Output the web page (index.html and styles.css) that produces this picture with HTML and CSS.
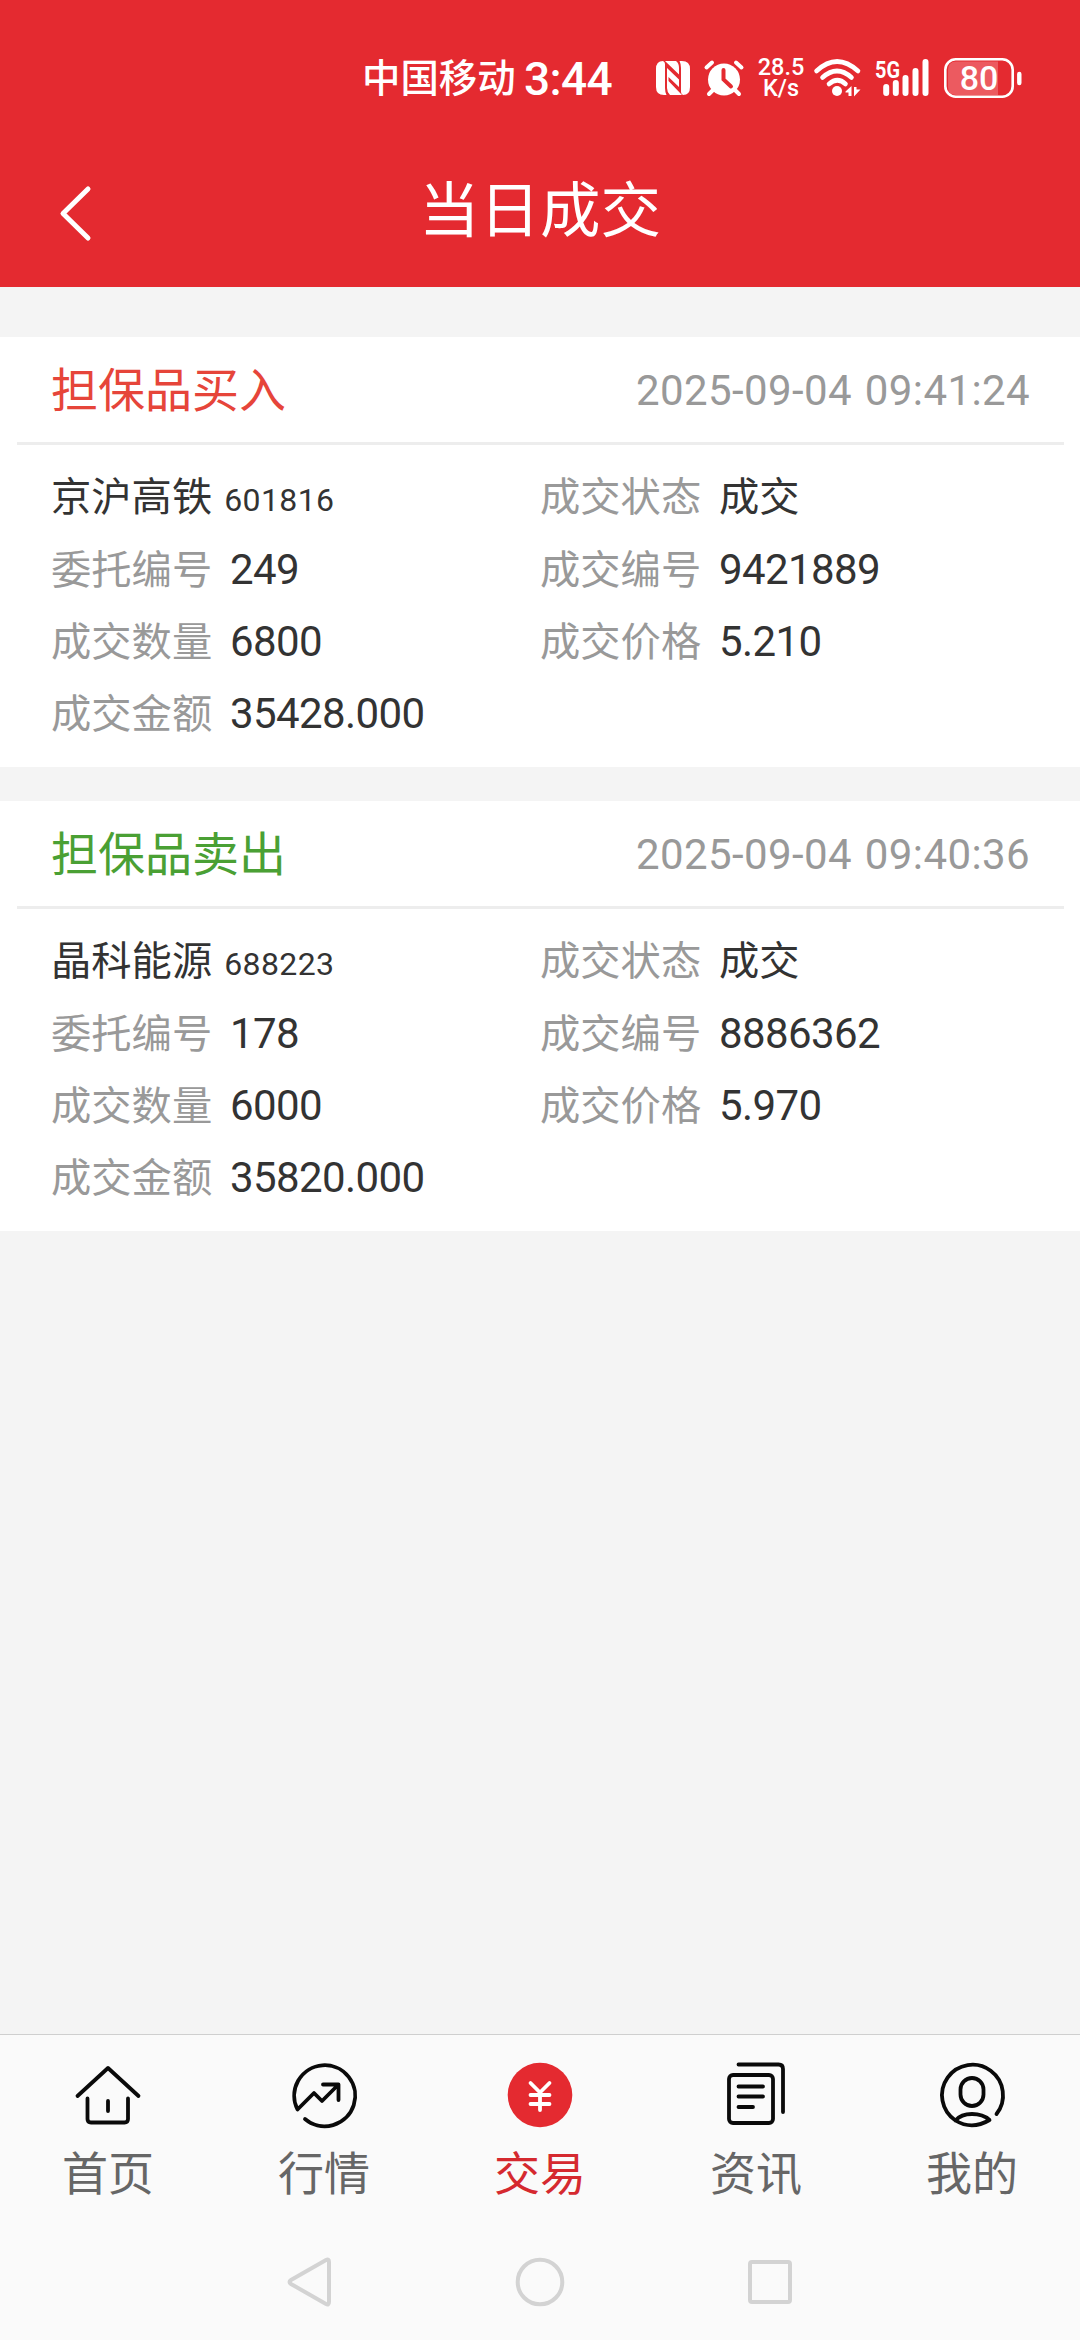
FILE: index.html
```html
<!DOCTYPE html>
<html lang="zh-CN">
<head>
<meta charset="utf-8">
<title>当日成交</title>
<link rel="stylesheet" href="styles.css">
</head>
<body>
<div class="screen">
  <header class="header">
    <div class="status">
      <span class="carrier">中国移动</span>
      <span class="clock">3:44</span>
      <svg class="nfc" width="34" height="34" viewBox="0 0 34 34">
        <path d="M7 0Q0 0 0 8V26Q0 34 8 34H10.500Q9 31 9 27V3Q9 1 7 0ZM27 34Q34 34 34 26V8Q34 0 26 0H23.500Q25 3 25 7V31Q25 33 27 34ZM9 0L23 13.500V7Q23 2 20 0ZM11 7V27Q11 31 14 34H26L12.500 20V16L23 26V18.500Z" fill="#fff"/>
      </svg>
      <svg class="alarm" width="40" height="36" viewBox="0 0 40 36">
        <circle cx="20" cy="19.500" r="16" fill="#fff"/>
        <path d="M2.500 7.500L8 2.500M37.500 7.500L32 2.500M5 34L9 30M35 34L31 30" stroke="#fff" stroke-width="4" stroke-linecap="round"/>
        <path d="M19.500 10V19.500L27 26.500" fill="none" stroke="#e42a30" stroke-width="4" stroke-linecap="round"/>
      </svg>
      <div class="speed"><span>28.5</span><span>K/s</span></div>
      <svg class="wifi" width="48" height="38" viewBox="0 0 48 38">
        <g fill="none" stroke="#fff" stroke-width="4.600" stroke-linecap="round">
          <path d="M2.500 12Q23 -7 44 12M8.500 18.500Q23 5.500 37.500 18.500M15 25Q23.500 17.500 31.500 25"/>
        </g>
        <circle cx="23" cy="32" r="5" fill="#fff"/>
        <path d="M31.500 32.500L37.500 27V37H34.500V33.500H31.500ZM40 28H42.500V30.500H46.500L40 37.500Z" fill="#fff"/>
      </svg>
      <svg class="signal" width="56" height="38" viewBox="0 0 56 38">
        <text class="signal-text" x="0" y="19" textLength="25" lengthAdjust="spacingAndGlyphs">5G</text>
        <path d="M11.200 28V34M20.800 24V34M30.500 19V34M40.500 12V34M50.500 3V34" stroke="#fff" stroke-width="6" stroke-linecap="round"/>
      </svg>
      <svg class="battery" width="78" height="40" viewBox="0 0 78 40">
        <path d="M12 3.500H54V37H12Q4 37 4 29V12Q4 3.500 12 3.500Z" fill="#ec5a60"/>
        <rect x="1.300" y="1.300" width="67.400" height="37.400" rx="10.500" fill="none" stroke="#fff" stroke-width="2.600"/>
        <path d="M75.300 16V25" stroke="#fff" stroke-width="4.400" stroke-linecap="round"/>
        <text class="battery-text" x="35" y="32" text-anchor="middle">80</text>
      </svg>
    </div>
    <div class="titlebar">
      <svg class="back" width="36" height="60" viewBox="0 0 36 60"><path d="M30 6L5 30.500L30 55" fill="none" stroke="#fff" stroke-width="5" stroke-linecap="round" stroke-linejoin="round"/></svg>
      <h1 class="title">当日成交</h1>
    </div>
  </header>

  <main class="list">
    <section class="card">
      <div class="card-head"><h2 class="side buy">担保品买入</h2><time class="date">2025-09-04 09:41:24</time></div>
      <div class="fields">
        <div class="field"><span class="name">京沪高铁</span><span class="code">601816</span></div>
        <div class="field"><span class="label">成交状态</span><span class="value state">成交</span></div>
        <div class="field"><span class="label">委托编号</span><span class="value">249</span></div>
        <div class="field"><span class="label">成交编号</span><span class="value">9421889</span></div>
        <div class="field"><span class="label">成交数量</span><span class="value">6800</span></div>
        <div class="field"><span class="label">成交价格</span><span class="value">5.210</span></div>
        <div class="field"><span class="label">成交金额</span><span class="value">35428.000</span></div>
      </div>
    </section>
    <section class="card">
      <div class="card-head"><h2 class="side sell">担保品卖出</h2><time class="date">2025-09-04 09:40:36</time></div>
      <div class="fields">
        <div class="field"><span class="name">晶科能源</span><span class="code">688223</span></div>
        <div class="field"><span class="label">成交状态</span><span class="value state">成交</span></div>
        <div class="field"><span class="label">委托编号</span><span class="value">178</span></div>
        <div class="field"><span class="label">成交编号</span><span class="value">8886362</span></div>
        <div class="field"><span class="label">成交数量</span><span class="value">6000</span></div>
        <div class="field"><span class="label">成交价格</span><span class="value">5.970</span></div>
        <div class="field"><span class="label">成交金额</span><span class="value">35820.000</span></div>
      </div>
    </section>
  </main>

  <nav class="tabs">
    <a class="tab">
      <svg class="icon" viewBox="0 0 66 66"><path d="M2.500 34L33 6L63.500 34M12.500 36.500V57Q12.500 60.500 16 60.500H49.500Q53 60.500 53 57V36.500M33 39V49"/></svg>
      <span>首页</span>
    </a>
    <a class="tab">
      <svg class="icon" viewBox="0 0 66 66"><path d="M6.500 47.500A30.500 30.500 0 1 1 14 57M6.500 47.500L23 31L31 39L46.500 23.500M32 22.500H47.500V38"/></svg>
      <span>行情</span>
    </a>
    <a class="tab active">
      <svg class="icon" viewBox="0 0 66 66"><circle class="disc" cx="33" cy="33" r="32.300"/><path class="yen" d="M23.500 21L33 30.500L42.500 21M33 30.500V48M23.500 33H42.500M23.500 42H42.500"/></svg>
      <span>交易</span>
    </a>
    <a class="tab">
      <svg class="icon" viewBox="0 0 66 66"><rect x="6" y="13" width="44" height="48" rx="4"/><path d="M15.500 2.500H55.500Q60 2.500 60 7V50M15.500 24.500H40M15.500 34.500H40M15.500 45H30"/></svg>
      <span>资讯</span>
    </a>
    <a class="tab">
      <svg class="icon" viewBox="0 0 66 66"><path d="M57.500 52A30.500 30.500 0 1 0 16.500 58.500Q33 68.500 50.500 58Q44 52 33 52Q22 52 16.500 58.500"/><rect x="21.500" y="16" width="23" height="28" rx="11.500"/></svg>
      <span>我的</span>
    </a>
  </nav>

  <footer class="sysnav">
    <svg width="50" height="50" viewBox="0 0 50 50"><path d="M6 23Q3 25 6 27L41 47Q44 48.500 44 45V5Q44 1.500 41 3Z"/></svg>
    <svg width="50" height="50" viewBox="0 0 50 50"><circle cx="25" cy="25" r="22.300"/></svg>
    <svg width="50" height="50" viewBox="0 0 50 50"><rect x="5" y="5" width="40" height="40" rx="2"/></svg>
  </footer>
</div>
</body>
</html>
```

FILE: styles.css
```css
* { box-sizing: border-box; }
body {
  margin: 0;
  background: #f4f4f4;
  font-family: Roboto, "Noto Sans CJK SC", sans-serif;
  color: #333;
}
.screen {
  display: flex;
  flex-direction: column;
  width: 1080px;
  height: 2340px;
}
svg { display: block; flex: none; overflow: visible; }
h1, h2 { margin: 0; font-weight: 400; }

.header { height: 287px; background: #e42a30; color: #fff; }
.status {
  display: flex;
  align-items: center;
  height: 132px;
  padding: 24px 0 0 362px;
  font-weight: 500;
}
.carrier { width: 162px; padding-top: 2px; font-size: 38.4px; line-height: 56px; white-space: nowrap; }
.clock { width: 132px; font-size: 46px; line-height: 56px; padding-top: 2px; letter-spacing: -0.6px; }
.nfc { margin-right: 14px; }
.alarm { margin-right: 13px; }
.speed {
  display: flex;
  flex-direction: column;
  align-items: center;
  width: 48px;
  margin-right: 9px;
  font-size: 23.5px;
  line-height: 21px;
}
.wifi { margin-right: 13px; }
.signal { margin-right: 13px; }
.signal-text { font-size: 24px; font-weight: 700; fill: #fff; }
.battery-text { font-size: 34px; font-weight: 500; fill: #fff; }

.titlebar {
  display: grid;
  grid-template-columns: 120px 1fr 120px;
  align-items: center;
  height: 154px;
}
.back { margin: 8px 0 0 58px; }
.title { padding-top: 5px; font-size: 60.5px; line-height: 88px; text-align: center; }

.list {
  display: flex;
  flex: 1;
  flex-direction: column;
  gap: 34px;
  padding-top: 50px;
}
.card { height: 430px; background: #fff; }
.card-head {
  display: flex;
  align-items: center;
  justify-content: space-between;
  height: 108px;
  margin: 0 16px 0 17px;
  padding: 3px 34px 0;
  border-bottom: 3px solid #ededed;
}
.side { font-size: 47px; line-height: 70px; }
.buy { color: #e6453a; }
.sell { color: #4aa034; }
.date { font-size: 42px; line-height: 60px; letter-spacing: 0.4px; word-spacing: 2px; color: #999; }
.fields {
  display: grid;
  grid-template-columns: 489px 1fr;
  grid-auto-rows: 72px;
  padding: 17px 0 0 51px;
}
.field { display: flex; align-items: baseline; font-size: 40.3px; line-height: 72px; }
.label { color: #999; width: 179px; }
.value { font-size: 42px; letter-spacing: -0.6px; }
.state { font-size: 40.3px; letter-spacing: 0; }
.name { margin-right: 12px; }
.code { font-size: 32px; letter-spacing: 0.4px; }

.tabs {
  display: grid;
  grid-template-columns: repeat(5, 1fr);
  height: 186px;
  background: #fafafa;
  border-top: 1px solid #cfcfcf;
}
.tab {
  display: flex;
  flex-direction: column;
  align-items: center;
  padding-top: 27px;
  font-size: 46px;
  line-height: 68px;
  color: #666;
}
.tab span { margin-top: 12px; }
.icon {
  width: 66px;
  height: 66px;
  fill: none;
  stroke: #0a0a0a;
  stroke-width: 3.8;
  stroke-linecap: round;
  stroke-linejoin: round;
}
.active { color: #d5292f; }
.disc { fill: #e42a30; stroke: none; }
.yen { stroke: #fff; }

.sysnav {
  display: flex;
  justify-content: center;
  gap: 180px;
  height: 120px;
  padding-top: 37px;
  background: #fafafa;
}
.sysnav svg { fill: none; stroke: #d3d3d3; stroke-width: 4; }
```
